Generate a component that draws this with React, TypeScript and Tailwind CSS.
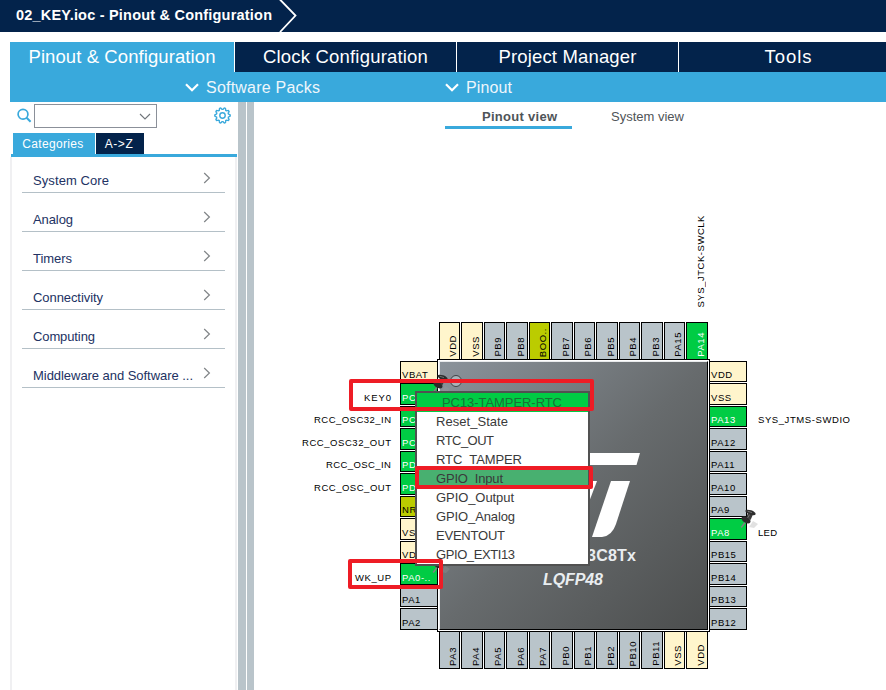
import { useLayoutEffect, useRef } from "react";
import type { ReactNode } from "react";

/* Text whose tracking is adjusted so that it spans a given length. */
function Fit({ text, w, className = "" }: { text: string; w: number; className?: string }) {
  const ref = useRef<HTMLSpanElement>(null);
  useLayoutEffect(() => {
    const el = ref.current;
    if (!el) return;
    el.style.letterSpacing = "0px";
    const r = el.getBoundingClientRect();
    const len = Math.max(r.width, r.height);
    el.style.letterSpacing = `${(w - len) / (text.length - 1)}px`;
  }, [text, w]);
  return (
    <span ref={ref} className={`inline-block whitespace-pre ${className}`}>
      {text}
    </span>
  );
}

const TONES = {
  power: "bg-[#fff5cc] text-black",
  idle: "bg-[#b9c4ca] text-black",
  used: "bg-[#00cc44] text-white",
  boot: "bg-[#bbcc00] text-black",
};
type Pin = [string, keyof typeof TONES];

const TOP: Pin[] = [
  ["VDD", "power"], ["VSS", "power"], ["PB9", "idle"], ["PB8", "idle"], ["BOO..", "boot"], ["PB7", "idle"],
  ["PB6", "idle"], ["PB5", "idle"], ["PB4", "idle"], ["PB3", "idle"], ["PA15", "idle"], ["PA14", "used"],
];
const BOTTOM: Pin[] = [
  ["PA3", "idle"], ["PA4", "idle"], ["PA5", "idle"], ["PA6", "idle"], ["PA7", "idle"], ["PB0", "idle"],
  ["PB1", "idle"], ["PB2", "idle"], ["PB10", "idle"], ["PB11", "idle"], ["VSS", "power"], ["VDD", "power"],
];
const LEFT: Pin[] = [
  ["VBAT", "power"], ["PC", "used"], ["PC", "used"], ["PC", "used"], ["PD", "used"], ["PD", "used"],
  ["NR", "boot"], ["VS", "power"], ["VD", "power"], ["PA0-..", "used"], ["PA1", "idle"], ["PA2", "idle"],
];
const RIGHT: Pin[] = [
  ["VDD", "power"], ["VSS", "power"], ["PA13", "used"], ["PA12", "idle"], ["PA11", "idle"], ["PA10", "idle"],
  ["PA9", "idle"], ["PA8", "used"], ["PB15", "idle"], ["PB14", "idle"], ["PB13", "idle"], ["PB12", "idle"],
];

function SidePins({ pins, className }: { pins: Pin[]; className: string }) {
  return (
    <div className={`absolute flex w-[38px] flex-col gap-px ${className}`}>
      {pins.map(([t, tone], i) => (
        <div
          key={i}
          className={`flex shrink-0 items-end border border-black pb-px pl-px text-[9.5px] leading-[11px] tracking-[0.55px] ${i % 2 ? "h-[22px]" : "h-[21px]"} ${TONES[tone]}`}
        >
          {t}
        </div>
      ))}
    </div>
  );
}

function EdgePins({ pins, className }: { pins: Pin[]; className: string }) {
  return (
    <div className={`absolute flex h-[38px] gap-px ${className}`}>
      {pins.map(([t, tone], i) => (
        <div
          key={i}
          className={`flex shrink-0 items-end justify-end border border-black pr-px pb-[2px] text-[9.5px] leading-[11px] tracking-[0.55px] ${i % 2 ? "w-[22px]" : "w-[21px]"} ${TONES[tone]}`}
        >
          <span className="rotate-180 [writing-mode:vertical-rl]">{t}</span>
        </div>
      ))}
    </div>
  );
}

function PushPin({ className }: { className: string }) {
  return (
    <svg className={`absolute ${className}`} width="20" height="22" viewBox="0 0 20 22">
      <path d="M9 18 L13 12 L18 15 L14 19 Z" fill="#9a9a9a" opacity="0.3" />
      <path d="M5 13.5 L1.2 18.5" stroke="#808080" strokeWidth="1.5" />
      <path d="M6.5 7.5 L8 4 L13 5.5 L10.5 11 Z" fill="#3a3a3a" />
      <ellipse cx="10.5" cy="3.4" rx="5.4" ry="2.2" transform="rotate(20 10.5 3.4)" fill="#2e2e2e" />
      <ellipse cx="6" cy="10.8" rx="5" ry="3" transform="rotate(32 6 10.8)" fill="#2b2b2b" />
      <path d="M8 8.6 L9.4 5.6 M7.6 2.2 L12 3.6" stroke="#757575" strokeWidth="0.9" />
    </svg>
  );
}

function Label({ text, w, className }: { text: string; w: number; className: string }) {
  return (
    <div className={`absolute text-[9.5px] leading-[12px] text-black ${className}`}>
      <Fit text={text} w={w} />
    </div>
  );
}

const CATEGORIES: [string, number][] = [
  ["System Core", 76],
  ["Analog", 40],
  ["Timers", 39],
  ["Connectivity", 70],
  ["Computing", 62],
  ["Middleware and Software ...", 160],
];

const MENU: [string, number][] = [
  ["Reset_State", 72],
  ["RTC_OUT", 58],
  ["RTC_TAMPER", 86],
  ["GPIO_Input", 67],
  ["GPIO_Output", 78],
  ["GPIO_Analog", 79],
  ["EVENTOUT", 69],
  ["GPIO_EXTI13", 79],
];

function Tab({ children, className }: { children: ReactNode; className: string }) {
  return <div className={`flex h-[30px] items-center justify-center text-[18.5px] text-white ${className}`}>{children}</div>;
}

function Down({ className }: { className: string }) {
  return (
    <svg className={className} width="14" height="9" viewBox="0 0 14 9" fill="none" stroke="#fff" strokeWidth="2.2">
      <path d="M1 1.2 L7 7.2 L13 1.2" />
    </svg>
  );
}

function Gear() {
  const pts: string[] = [];
  for (let i = 0; i < 80; i++) {
    const a = (i / 80) * Math.PI * 2;
    const r = 6.9 + 0.8 * Math.tanh(3 * Math.cos(a * 10));
    pts.push(`${(8.5 + r * Math.cos(a)).toFixed(2)},${(8.5 + r * Math.sin(a)).toFixed(2)}`);
  }
  return (
    <svg width="17" height="17" viewBox="0 0 17 17" fill="none" stroke="#39a9dc" strokeWidth="1.4">
      <polygon points={pts.join(" ")} />
      <circle cx="8.5" cy="8.5" r="2.7" />
    </svg>
  );
}

function Sidebar() {
  return (
    <aside className="flex w-[238px] shrink-0 flex-col pl-[10px]">
      <div className="flex h-[31px] items-start">
        <svg className="mt-[6px] ml-[7px]" width="15" height="16" viewBox="0 0 15 16" fill="none" stroke="#39a9dc" strokeWidth="1.7">
          <circle cx="6" cy="6.3" r="4.9" />
          <path d="M9.6 9.8 L13.6 13.8" strokeWidth="2" />
        </svg>
        <div className="mt-[2px] ml-[2px] flex h-[24px] w-[123px] items-center justify-end border border-[#8b9099] pr-[5px]">
          <svg width="12" height="7" viewBox="0 0 12 7" fill="none" stroke="#70757a" strokeWidth="1.1">
            <path d="M1 1 L6 6 L11 1" />
          </svg>
        </div>
        <div className="mt-[5px] ml-[57px]">
          <Gear />
        </div>
      </div>
      <div className="ml-[3px] flex h-[21px] gap-px text-[12px] text-white">
        <div className="flex w-[82px] items-center justify-center bg-[#39a9dc] pr-[2px]">
          <Fit text="Categories" w={61} />
        </div>
        <div className="flex w-[48px] items-center justify-center bg-[#03234b] pr-[2px]">
          <Fit text="A->Z" w={28} />
        </div>
      </div>
      <div className="ml-px h-[3px] w-[226px] bg-[#39a9dc]" />
      <div className="flex w-[227px] grow flex-col border-x-2 border-[#f0f0f2] px-[10px]">
        {CATEGORIES.map(([name, w], i) => (
          <div
            key={name}
            className={`flex w-[203px] shrink-0 items-end justify-between border-b border-[#b4c0c7] pr-[14px] pb-[4px] pl-[11px] text-[13px] leading-[15px] text-[#223263] ${i ? "h-[39px]" : "h-[36px]"}`}
          >
            <Fit text={name} w={w} />
            <svg className="mb-[4px]" width="8" height="12" viewBox="0 0 8 12" fill="none" stroke="#808487" strokeWidth="1.2">
              <path d="M1.2 1 L6.4 6 L1.2 11" />
            </svg>
          </div>
        ))}
      </div>
    </aside>
  );
}

function Chip() {
  return (
    <div className="absolute top-[257px] left-[183px] h-[273px] w-[273px] border border-black bg-white p-px">
      <div className="relative h-full w-full border border-t-[#e8eaec] border-r-black border-b-black border-l-[#e8eaec] bg-linear-to-br from-[#8b939b] via-[#676b6d] to-[#4c4e4e]">
        <div className="absolute top-[13px] left-[10px] h-[12px] w-[12px] rounded-full border border-[#3f4346] bg-[#a9b3b9]" />
        <svg className="absolute top-[91px] left-[140px]" width="62" height="86" viewBox="580 453 62 86" fill="#fff">
          <path d="M580 453 H640 L636.5 465 H580 Z" />
          <path d="M611 481 H630 L616 524 Q612 536 602 537 H592 Z" />
          <path d="M586 481 H597 L589 502 H586 Z" />
        </svg>
        <div className="absolute top-[184px] left-[147px] text-[16px] leading-[20px] font-bold text-[#e9edf0]">
          <Fit text="3C8Tx" w={49} />
        </div>
        <div className="absolute top-[208px] left-[103px] text-[16px] leading-[20px] font-bold text-[#e9edf0] italic">
          <Fit text="LQFP48" w={60} />
        </div>
      </div>
    </div>
  );
}

function ContextMenu() {
  return (
    <div className="absolute top-[289px] left-[161px] h-[175px] w-[175px] border-2 border-[#515151] bg-white text-[13px] leading-[19px] text-[#3a3a3a]">
      <div className="h-[19px] overflow-hidden bg-[#00cc44] pl-[25px] text-[#1a7035]">
        <Fit text="PC13-TAMPER-RTC" w={120} />
      </div>
      {MENU.map(([t, w]) => (
        <div key={t} className={`h-[19px] pl-[19px] ${t === "GPIO_Input" ? "bg-[#48b070]" : ""}`}>
          <Fit text={t} w={w} />
        </div>
      ))}
    </div>
  );
}

function PinoutCanvas() {
  return (
    <main className="relative h-full w-[632px] shrink-0 overflow-hidden bg-white">
      <nav className="flex text-[13px] leading-[15px] text-[#4f5458]">
        <div className="ml-[191px] h-[27px] w-[127px] border-b-[3px] border-[#39a9dc] pt-[7px] pl-[37px] font-bold">
          <Fit text="Pinout view" w={75} />
        </div>
        <div className="pt-[7px] pl-[39px]">
          <Fit text="System view" w={73} />
        </div>
      </nav>

      <EdgePins pins={TOP} className="top-[220px] left-[185px]" />
      <EdgePins pins={BOTTOM} className="top-[529px] left-[185px]" />
      <SidePins pins={LEFT} className="top-[259px] left-[146px]" />
      <SidePins pins={RIGHT} className="top-[259px] left-[455px]" />
      <Chip />

      <div className="absolute top-[113px] left-[441px] text-[9.5px] leading-[12px] text-black">
        <Fit text="SYS_JTCK-SWCLK" w={92} className="rotate-180 [writing-mode:vertical-rl]" />
      </div>
      <Label text="KEY0" w={27} className="top-[290px] left-[110px]" />
      <Label text="RCC_OSC32_IN" w={77} className="top-[312px] left-[60px]" />
      <Label text="RCC_OSC32_OUT" w={89} className="top-[335px] left-[48px]" />
      <Label text="RCC_OSC_IN" w={65} className="top-[357px] left-[72px]" />
      <Label text="RCC_OSC_OUT" w={77} className="top-[380px] left-[60px]" />
      <Label text="WK_UP" w={36} className="top-[470px] left-[101px]" />
      <Label text="SYS_JTMS-SWDIO" w={92} className="top-[312px] left-[504px]" />
      <Label text="LED" w={19} className="top-[425px] left-[504px]" />

      <PushPin className="top-[272px] left-[178px]" />
      <PushPin className="top-[407px] left-[486px]" />
      <PushPin className="top-[452px] left-[178px]" />
      <ContextMenu />

      <div className="absolute top-[277px] left-[95px] h-[32px] w-[245px] rounded-[2px] border-4 border-[#ee1c25]" />
      <div className="absolute top-[364px] left-[161px] h-[23px] w-[178px] rounded-[2px] border-4 border-[#ee1c25]" />
      <div className="absolute top-[457px] left-[94px] h-[30px] w-[95px] rounded-[2px] border-4 border-[#ee1c25]" />
    </main>
  );
}

export default function App() {
  return (
    <div className="flex h-[690px] w-[886px] flex-col overflow-hidden bg-white font-['Liberation_Sans',Arial,sans-serif]">
      <header className="flex h-[32px] shrink-0 items-center bg-[#03234b] pl-[16px] text-[14.5px] font-bold text-white">
        <Fit text="02_KEY.ioc - Pinout & Configuration" w={256} />
        <svg className="ml-[7px]" width="19" height="32" viewBox="0 0 19 32" fill="none" stroke="#fff" strokeWidth="1.8">
          <path d="M1 -.5 L16.5 15.5 L1 32" />
        </svg>
      </header>
      <div className="mt-[10px] ml-[10px] flex shrink-0 gap-px">
        <Tab className="w-[224px] bg-[#39a9dc]"><Fit text="Pinout & Configuration" w={187} /></Tab>
        <Tab className="w-[221px] bg-[#03234b]"><Fit text="Clock Configuration" w={165} /></Tab>
        <Tab className="w-[221px] bg-[#03234b]"><Fit text="Project Manager" w={138} /></Tab>
        <Tab className="grow bg-[#03234b] pl-[12px]"><Fit text="Tools" w={47} /></Tab>
      </div>
      <div className="ml-[10px] flex h-[30px] shrink-0 items-center bg-[#39a9dc] pt-px text-[16px] text-[#eef6fb]">
        <Down className="ml-[175px]" />
        <span className="ml-[7px] w-[239px]"><Fit text="Software Packs" w={114} /></span>
        <Down className="" />
        <span className="ml-[7px]"><Fit text="Pinout" w={46} /></span>
      </div>
      <div className="flex h-[588px]">
        <Sidebar />
        <div className="flex w-[16px] shrink-0 gap-px bg-white">
          <div className="w-[8px] bg-[#b9c4ca]" />
          <div className="w-[7px] bg-[#b9c4ca]" />
        </div>
        <PinoutCanvas />
      </div>
    </div>
  );
}
